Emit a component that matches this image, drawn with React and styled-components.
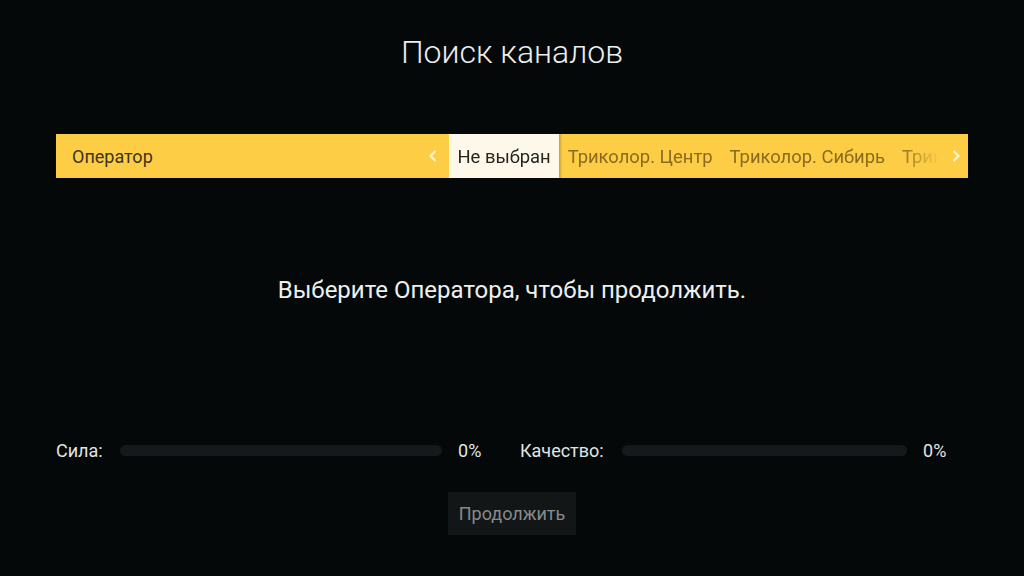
import React from "react";
import styled, { createGlobalStyle } from "styled-components";

const Global = createGlobalStyle`
  html, body { margin: 0; padding: 0; background: #050809; }
  body { font-family: Roboto, "Noto Sans", sans-serif; }
`;

const Screen = styled.div`
  width: 1024px;
  height: 576px;
  background: #050809;
  display: flex;
  flex-direction: column;
  align-items: stretch;
  overflow: hidden;
  color: #e8eaea;
`;

const Title = styled.h1`
  margin: 30px 0 0;
  height: 44px;
  line-height: 44px;
  text-align: center;
  font-size: 32px;
  font-weight: 300;
  color: #eceeee;
`;

const Bar = styled.div`
  margin: 60px 56px 0;
  height: 44px;
  background: #fdcd45;
  display: flex;
  align-items: stretch;
`;

const BarLabel = styled.div`
  flex: 1;
  padding-left: 16px;
  display: flex;
  align-items: center;
  font-size: 18px;
  color: #3a3420;
`;

const Chevron = styled.div`
  width: ${(p) => p.$w}px;
  display: flex;
  align-items: center;
  justify-content: center;
  color: rgba(255, 250, 230, 0.85);
`;

const Viewport = styled.div`
  width: 495px;
  display: flex;
  align-items: stretch;
  overflow: hidden;
  white-space: nowrap;
  -webkit-mask-image: linear-gradient(to right, #000 450px, transparent 490px);
  mask-image: linear-gradient(to right, #000 450px, transparent 490px);
`;

const Item = styled.div`
  flex: none;
  padding: 0 8.5px;
  display: flex;
  align-items: center;
  font-size: 18.4px;
  color: ${(p) => (p.$active ? "#262620" : "#8a6b1e")};
  background: ${(p) => (p.$active ? "#fdf8ea" : "transparent")};
  box-shadow: ${(p) => (p.$active ? "2px 0 2px rgba(120, 90, 0, 0.35)" : "none")};
`;

const Message = styled.p`
  margin: 100px 0 0;
  line-height: 24px;
  text-align: center;
  font-size: 24px;
  color: #eef0f0;
`;

const SignalRow = styled.div`
  margin: 138px 0 0 56px;
  height: 20px;
  display: flex;
  align-items: center;
  font-size: 18px;
  color: #e2e5e5;
`;

const SignalLabel = styled.span`
  width: ${(p) => p.$w}px;
  flex: none;
`;

const Track = styled.div`
  width: ${(p) => p.$w}px;
  height: 11px;
  border-radius: 6px;
  background: #15191b;
  flex: none;
  margin-right: 16px;
  overflow: hidden;
`;

const Fill = styled.div`
  height: 100%;
  background: #fdcd45;
`;

const Percent = styled.span`
  width: ${(p) => p.$w}px;
  flex: none;
`;

const Button = styled.button`
  align-self: center;
  margin-top: 32px;
  width: 128px;
  height: 43px;
  border: none;
  background: #131617;
  color: #868b8c;
  font-family: Roboto, "Noto Sans", sans-serif;
  font-size: 18px;
  padding: 0;
`;

const ChevronIcon = ({ dir }) => (
  <svg width="10" height="12" viewBox="0 0 10 12">
    <polyline
      points={dir === "left" ? "7.5,1 2.5,6 7.5,11" : "2.5,1 7.5,6 2.5,11"}
      fill="none"
      stroke="currentColor"
      strokeWidth="2.2"
    />
  </svg>
);

const operators = ["Не выбран", "Триколор. Центр", "Триколор. Сибирь", "Триколор. Урал"];

export default function App() {
  const signal = 0;
  const quality = 0;
  return (
    <>
      <Global />
      <Screen>
        <Title>Поиск каналов</Title>
        <Bar>
          <BarLabel>Оператор</BarLabel>
          <Chevron $w={32}>
            <ChevronIcon dir="left" />
          </Chevron>
          <Viewport>
            {operators.map((o, i) => (
              <Item key={o} $active={i === 0}>
                {o}
              </Item>
            ))}
          </Viewport>
          <Chevron $w={24}>
            <ChevronIcon dir="right" />
          </Chevron>
        </Bar>
        <Message>Выберите Оператора, чтобы продолжить.</Message>
        <SignalRow>
          <SignalLabel $w={64}>Сила:</SignalLabel>
          <Track $w={322}>
            <Fill style={{ width: `${signal}%` }} />
          </Track>
          <Percent $w={62}>{signal}%</Percent>
          <SignalLabel $w={102}>Качество:</SignalLabel>
          <Track $w={285}>
            <Fill style={{ width: `${quality}%` }} />
          </Track>
          <Percent $w={40}>{quality}%</Percent>
        </SignalRow>
        <Button>Продолжить</Button>
      </Screen>
    </>
  );
}
